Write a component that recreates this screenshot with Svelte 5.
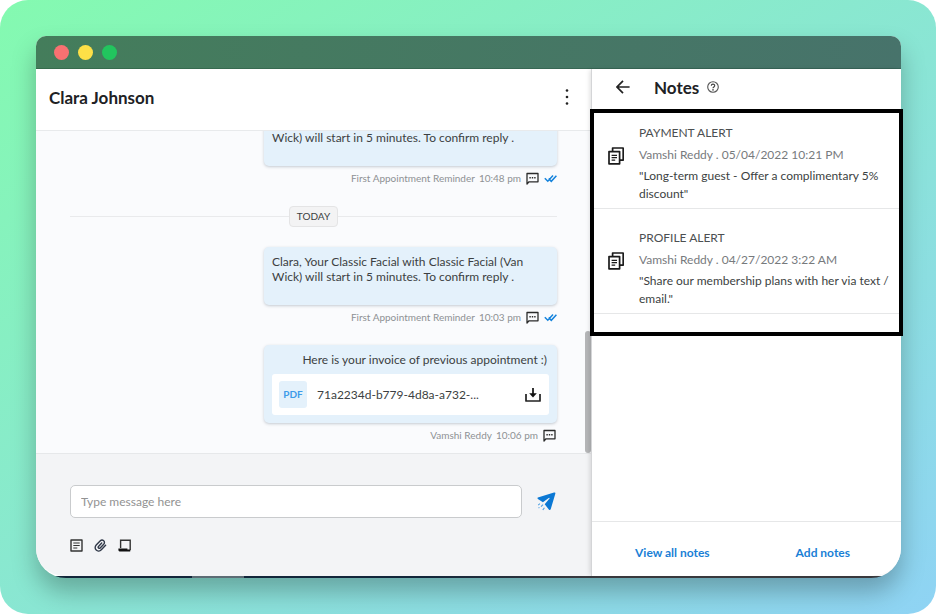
<script>
  const reminder = 'Clara, Your Classic Facial with Classic Facial (Van Wick) will start in 5 minutes. To confirm reply .';

  const notes = [
    { title: 'PAYMENT ALERT', meta: 'Vamshi Reddy . 05/04/2022 10:21 PM', text: '"Long-term guest - Offer a complimentary 5% discount"' },
    { title: 'PROFILE ALERT', meta: 'Vamshi Reddy . 04/27/2022 3:22 AM', text: '"Share our membership plans with her via text / email."' }
  ];

  let draft = $state('');
</script>

{#snippet smsIcon()}
  <svg class="sms" width="13" height="13" viewBox="0 0 13 13" aria-hidden="true">
    <path d="M1 12V1.5h11v8.3H3z" fill="none" stroke="#2b2b2b" stroke-width="1.3" stroke-linejoin="round" />
    <path d="M3.4 5h1.4v1.4H3.4zM5.8 5h1.4v1.4H5.8zM8.2 5h1.4v1.4H8.2z" fill="#2b2b2b" />
  </svg>
{/snippet}

{#snippet ticks()}
  <svg width="13" height="9" viewBox="0 0 13 9" aria-hidden="true">
    <path d="M.8 4.2l3 3L9 1.6M4.6 4.6l2.7 2.7L12.4 1.8" fill="none" stroke="#1583dc" stroke-width="1.5" />
  </svg>
{/snippet}

{#snippet reminderMessage(time)}
  <article class="message">
    <p class="bubble reminder">{reminder}</p>
    <footer class="meta">
      <span>First Appointment Reminder</span><span>{time}</span>
      {@render smsIcon()}
      {@render ticks()}
    </footer>
  </article>
{/snippet}

<div class="stage">
  <main class="window">
    <div class="titlebar"><i class="red"></i><i class="yellow"></i><i class="green"></i></div>

    <div class="body">
      <section class="chat">
        <header class="chat-head">
          <h1>Clara Johnson</h1>
          <button class="icon" type="button" aria-label="More options">
            <svg width="4" height="18" viewBox="0 0 4 18"><g fill="#222"><circle cx="2" cy="2.5" r="1.3" /><circle cx="2" cy="9" r="1.3" /><circle cx="2" cy="15.5" r="1.3" /></g></svg>
          </button>
        </header>

        <div class="thread">
          {@render reminderMessage('10:48 pm')}

          <div class="day"><span>TODAY</span></div>

          {@render reminderMessage('10:03 pm')}

          <article class="message">
            <div class="bubble invoice">
              <p>Here is your invoice of previous appointment :)</p>
              <div class="file">
                <span class="type">PDF</span>
                <span class="name">71a2234d-b779-4d8a-a732-...</span>
                <button class="icon" type="button" aria-label="Download">
                  <svg width="16" height="16" viewBox="0 0 16 16">
                    <path d="M1 7v7h14V7" fill="none" stroke="#222" stroke-width="1.7" stroke-linejoin="round" />
                    <path d="M8 1v7" stroke="#111" stroke-width="1.7" />
                    <path d="M4.2 6.2h7.6L8 10.6z" fill="#111" />
                  </svg>
                </button>
              </div>
            </div>
            <footer class="meta">
              <span>Vamshi Reddy</span><span>10:06 pm</span>
              {@render smsIcon()}
            </footer>
          </article>

          <div class="thumb"></div>
        </div>

        <form class="composer" onsubmit={(e) => e.preventDefault()}>
          <div class="entry">
            <input type="text" aria-label="Message" placeholder="Type message here" bind:value={draft} />
            <button class="icon" type="submit" aria-label="Send">
              <svg width="19" height="19" viewBox="0 0 19 19">
                <path d="M18.3.7Q18 .3 17 .6L.9 5.400Q0 6 .9 6.900l5 3.400 6.200-4.600.6.6-5 5.900 4.300 5.500Q13 18.600 13.700 17.300L18.400 1.600z" fill="#0b78d4" />
                <path d="M1.200 13.100l1.700-1.400M4 14.600l2-2M5.800 18l1.600-2.300M1.600 16l.8-.6" stroke="#4c9fe3" stroke-width="1.100" fill="none" />
              </svg>
            </button>
          </div>
          <div class="tools">
            <button class="icon" type="button" aria-label="Templates">
              <svg width="13" height="13" viewBox="0 0 13 13"><path d="M1 1h11v11H1z" fill="none" stroke="#333" stroke-width="1.4" stroke-linejoin="round" /><path d="M3.3 4h6.4M3.3 6.5h6.4M3.3 9h4" stroke="#333" stroke-width="1.2" /></svg>
            </button>
            <button class="icon" type="button" aria-label="Attach file">
              <svg width="13" height="13" viewBox="0 0 13 13"><path d="M11.6 6.2l-4.3 4.5C5.900 12.200 3.600 12.400 2.200 11.100.8 9.800.8 7.600 2.200 6.100l3.900-4.100c1-1 2.600-1.100 3.600-.200 1 .9 1 2.400 0 3.400L6.200 8.900c-.5.5-1.200.5-1.700.1s-.5-1.100 0-1.600l3.200-3.300" fill="none" stroke="#2f3747" stroke-width="1.4" stroke-linecap="round" /></svg>
            </button>
            <button class="icon" type="button" aria-label="Forms">
              <svg width="13" height="13" viewBox="0 0 13 13"><path d="M2.600 9V1.200h9.600v10" fill="none" stroke="#333" stroke-width="1.4" /><path d="M.4 9.600h9v1h2.800v1.800H1.600Q.4 12.400.4 11z" fill="#111" /></svg>
            </button>
          </div>
        </form>
      </section>

      <aside class="panel">
        <header class="panel-head">
          <button class="icon" type="button" aria-label="Back">
            <svg width="14" height="14" viewBox="0 0 14 14"><path d="M7 .8L1 7l6 6.200M1.200 7H13.600" fill="none" stroke="#222" stroke-width="1.700" /></svg>
          </button>
          <h2>Notes</h2>
          <svg width="12" height="12" viewBox="0 0 12 12" role="img" aria-label="Help"><circle cx="6" cy="6" r="5.300" fill="none" stroke="#555" stroke-width="1.100" /><path d="M4.300 4.800c0-2.100 3.400-2.100 3.400-.1C7.700 5.900 6 5.900 6 7.200" fill="none" stroke="#444" stroke-width="1.200" /><circle cx="6" cy="8.900" r=".8" fill="#444" /></svg>
        </header>

        <ul class="notes">
          {#each notes as note}
            <li>
              <svg width="16" height="18" viewBox="0 0 16 18" aria-hidden="true">
                <path d="M4.600 4V1h10.600v12.200H12" fill="none" stroke="#1b1b1b" stroke-width="1.700" stroke-linejoin="round" />
                <path d="M1 4.600h10.600v12.200H1z" fill="none" stroke="#1b1b1b" stroke-width="1.700" stroke-linejoin="round" />
                <path d="M3.600 8.300h5.400M3.600 10.700h5.400M3.600 13.100h3.600" stroke="#1b1b1b" stroke-width="1.300" />
              </svg>
              <div>
                <h3>{note.title}</h3>
                <p class="by">{note.meta}</p>
                <p>{note.text}</p>
              </div>
            </li>
          {/each}
        </ul>

        <footer class="panel-foot">
          <a href="#all">View all notes</a>
          <a href="#add">Add notes</a>
        </footer>
      </aside>
    </div>
  </main>
</div>

<style>
  :global(body) { background: #fff; }
  .stage, .stage * { box-sizing: border-box; }
  .stage {
    display: flex;
    min-height: 100vh;
    padding: 36px 35px 36px 36px;
    border-radius: 28px;
    background: linear-gradient(to bottom right, #84fab0, #8fd3f4);
    font-family: Lato, 'Liberation Sans', sans-serif;
    font-size: 12px;
    color: #3c3f42;
  }
  h1, h2, h3, p, ul { margin: 0; padding: 0; font-weight: 400; }
  svg { display: block; flex: none; }
  .icon { display: block; flex: none; padding: 0; border: 0; background: none; cursor: pointer; }

  .window {
    flex: 1;
    display: flex;
    flex-direction: column;
    min-width: 0;
    padding-bottom: 2px;
    border-radius: 10px 10px 30px 30px;
    background:
      linear-gradient(90deg, #12263a 0 18%, #5c6c75 18% 24%, #12263a 24% 45%, #3b3b3f 65%) bottom / 100% 2px no-repeat,
      #fff;
    box-shadow: 0 14px 24px rgba(0, 0, 0, 0.26);
  }
  .titlebar {
    display: flex;
    align-items: center;
    gap: 9px;
    height: 33px;
    padding: 0 18px 1px;
    border-radius: 10px 10px 0 0;
    background: linear-gradient(100deg, #447d5b, #47736b);
    box-shadow: inset 0 -1px rgba(0, 40, 20, 0.2);
  }
  .titlebar i { width: 15px; height: 15px; border-radius: 50%; }
  .red { background: #f87171; }
  .yellow { background: #fde047; }
  .green { background: #22c55e; }
  .body { flex: 1; display: flex; min-height: 0; }

  .chat { flex: 1; display: flex; flex-direction: column; min-width: 0; }
  .chat-head {
    display: flex;
    align-items: center;
    justify-content: space-between;
    height: 62px;
    padding: 0 23px 5px 13px;
    border-bottom: 1px solid #e8eaec;
  }
  h1 { font-size: 17px; font-weight: 700; color: #202124; }

  .thread {
    position: relative;
    flex: 1 1 0;
    display: flex;
    flex-direction: column;
    justify-content: flex-end;
    gap: 20px;
    min-height: 0;
    padding: 0 35px 10px 34px;
    overflow: hidden;
    background: #fafbfd;
  }
  .message { flex: none; align-self: flex-end; width: 293px; }
  .bubble {
    border-radius: 5px;
    background: #e4f1fb;
    box-shadow: 0 1px 3px rgba(40, 60, 80, 0.25);
    line-height: 15px;
  }
  .reminder { padding: 7px 8px 21px; }
  .invoice { padding: 7px 8px 8px; }
  .invoice p { padding-right: 2px; text-align: right; }
  .file {
    display: flex;
    align-items: center;
    height: 41px;
    margin-top: 7px;
    padding: 0 8px 0 7px;
    border-radius: 3px;
    background: #fff;
  }
  .type {
    width: 28px;
    border-radius: 3px;
    background: #e4f1fb;
    color: #3d9be9;
    font-size: 10px;
    font-weight: 700;
    line-height: 27px;
    text-align: center;
  }
  .name { flex: 1; padding-left: 10px; }
  .meta {
    display: flex;
    align-items: center;
    justify-content: flex-end;
    gap: 4px;
    height: 16px;
    margin-top: 4px;
    font-size: 10px;
    color: #8e9194;
  }
  .meta .sms { margin: 0 1px; }
  .day { flex: none; display: flex; align-items: center; }
  .day::before, .day::after { content: ''; flex: 1; height: 1px; background: #e9eaec; }
  .day span {
    padding: 0 7px;
    border: 1px solid #e4e4e5;
    border-radius: 4px;
    background: #f3f3f4;
    font-size: 10px;
    line-height: 19px;
  }
  .thumb {
    position: absolute;
    right: 1px;
    bottom: 0;
    width: 6px;
    height: 122px;
    border-radius: 3px;
    background: #b5b6b8;
  }

  .composer {
    height: 123px;
    padding: 31px 36px 0 34px;
    border-top: 1px solid #e6e8ea;
    border-bottom-left-radius: 28px;
    background: #f3f4f6;
  }
  .entry { display: flex; align-items: center; gap: 15px; }
  input {
    flex: 1;
    min-width: 0;
    height: 33px;
    padding: 0 10px;
    border: 1px solid #c9cbcd;
    border-radius: 5px;
    background: #fff;
    font: inherit;
  }
  input::placeholder { color: #929292; opacity: 1; }
  .tools { display: flex; gap: 11px; margin-top: 21px; }

  .panel {
    position: relative;
    display: flex;
    flex-direction: column;
    width: 309px;
    border-bottom-right-radius: 28px;
    background: #fff;
    box-shadow: -1px 0 #d4d5d7, -3px 0 5px -1px rgba(0, 0, 0, 0.14);
  }
  .panel-head { display: flex; align-items: center; height: 40px; padding: 0 24px 4px; }
  h2 { margin: 0 8px 0 24px; font-size: 17px; font-weight: 700; color: #202124; }
  .notes {
    position: relative;
    padding-bottom: 22px;
    list-style: none;
  }
  .notes::after {
    content: '';
    position: absolute;
    inset: 0 -2px;
    border: 4px solid #000;
    pointer-events: none;
  }
  li {
    display: flex;
    gap: 15px;
    padding: 20px 8px 5px 16px;
    border-bottom: 1px solid #e6e7e8;
    line-height: 18px;
  }
  li:first-child { padding-top: 15px; }
  li svg { margin-top: 23px; }
  h3 { font-size: 12px; color: #4c4f51; }
  .by { margin: 4px 0 3px; color: #777a7d; }
  .panel-foot {
    display: flex;
    align-items: center;
    justify-content: space-between;
    height: 55px;
    margin-top: auto;
    padding: 6px 51px 0 43px;
    border-top: 1px solid #e6e7e8;
  }
  a { color: #1a7fd6; font-weight: 700; text-decoration: none; }
</style>
